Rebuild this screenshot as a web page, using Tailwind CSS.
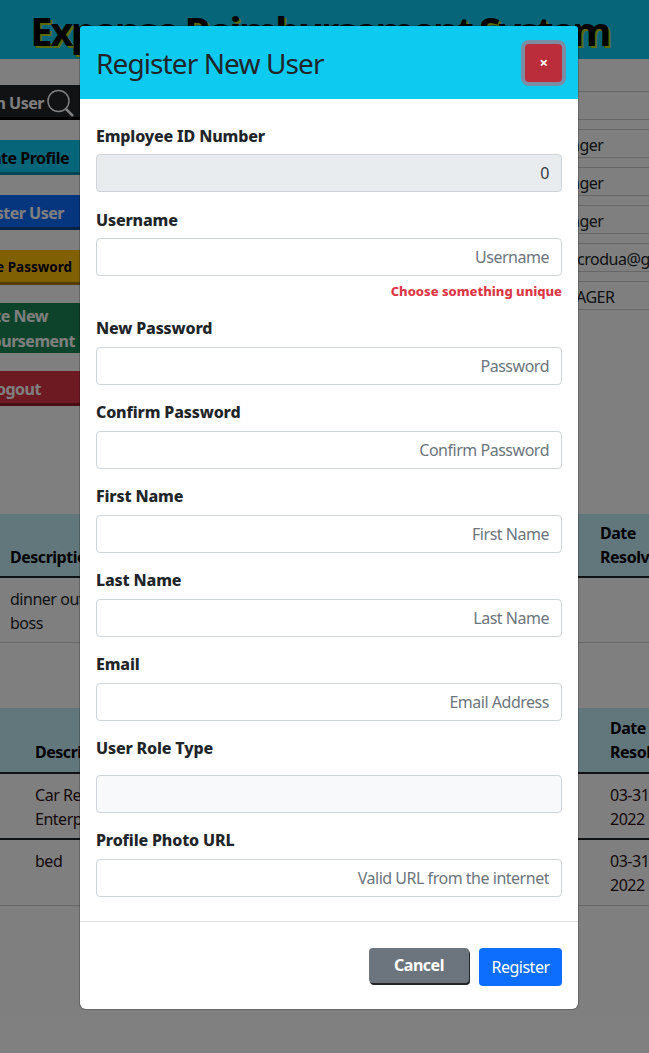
<!DOCTYPE html>
<html lang="en">
<head>
    <meta charset="UTF-8">
    <meta name="viewport" content="width=device-width, initial-scale=1.0">
    <title>Expense Reimbursement System</title>
    <script src="https://cdn.jsdelivr.net/npm/@tailwindcss/browser@4"></script>
</head>
<body class="bg-white font-['Noto_Sans',sans-serif] tracking-[-0.03em] text-[#212529]">
<div class="relative h-[1053px] w-[649px] overflow-hidden">

    <!-- Page behind the dialog -->
    <header class="flex h-[59px] justify-center overflow-hidden bg-[#0dcaf0] pr-[10px] pt-[5px]">
        <h1 class="whitespace-nowrap text-[40px] leading-[52px] font-bold tracking-[-2.6px] text-black [text-shadow:2px_2px_0_#b5d600]">Expense Reimbursement System</h1>
    </header>

    <div class="flex h-[455px] items-start">
        <div class="ml-[-100px] flex w-[180px] shrink-0 flex-col font-bold">
            <div class="mt-[26px] flex h-[35px] items-center justify-end whitespace-nowrap bg-[#212529] pr-[6px] text-white shadow-[inset_0_-3px_0_#000]">
                Search User
                <svg class="ml-[3px] shrink-0" width="27" height="28" viewBox="0 0 27 28" fill="none" stroke="#fff" stroke-width="1.5"><circle cx="11.5" cy="12" r="10.5"></circle><path d="M19 20l7 7" stroke-width="2.5"></path></svg>
            </div>
            <div class="mt-[20px] flex h-[35px] items-center justify-end whitespace-nowrap bg-[#0dcaf0] pr-[11px] text-black shadow-[inset_0_-3px_0_#0a8ca8]">Update Profile</div>
            <div class="mt-[20px] flex h-[35px] items-center justify-end whitespace-nowrap bg-[#0d6efd] pr-[16px] text-white shadow-[inset_0_-3px_0_#08428f]">Register User</div>
            <div class="mt-[20px] flex h-[35px] items-center justify-end whitespace-nowrap bg-[#ffc107] pr-[8px] text-[13.5px] tracking-normal text-black shadow-[inset_0_-3px_0_#a67c00]">Change Password</div>
            <div class="mt-[18px] h-[50px] whitespace-nowrap bg-[#198754] pr-[5px] pt-px text-right leading-[25px] text-white">
                <span class="block pr-[27px]">Create New</span>
                <span class="block">Reimbursement</span>
            </div>
            <div class="mt-[18px] flex h-[35px] items-center justify-end whitespace-nowrap bg-[#dc3545] pr-[39px] text-white shadow-[inset_0_-3px_0_#8f1f2a]">Logout</div>
        </div>

        <div class="ml-[220px] flex-1 pt-[32px]">
            <div class="flex flex-col gap-[9px] text-[16px]">
                <div class="h-[29px] border-y border-[#cfcfcf]"></div>
                <div class="h-[29px] whitespace-nowrap border-y border-[#cfcfcf] pl-[239px] leading-[30px]">Manager</div>
                <div class="h-[29px] whitespace-nowrap border-y border-[#cfcfcf] pl-[239px] leading-[30px]">Manager</div>
                <div class="h-[29px] whitespace-nowrap border-y border-[#cfcfcf] pl-[239px] leading-[30px]">Manager</div>
                <div class="h-[29px] whitespace-nowrap border-y border-[#cfcfcf] pl-[277px] leading-[30px]">crodua@gmail.com</div>
                <div class="h-[29px] whitespace-nowrap border-y border-[#cfcfcf] pl-[276px] leading-[30px]">AGER</div>
            </div>
        </div>
    </div>

    <!-- Pending table -->
    <div class="h-[64px] border-b-2 border-[#212529] bg-[#c5eef7]">
        <div class="flex h-[62px] items-end pb-[7px] font-bold leading-6 text-black">
            <span class="ml-[10px] w-[590px] shrink-0 whitespace-nowrap">Description</span>
            <span class="whitespace-nowrap">Date<br>Resolved</span>
        </div>
    </div>
    <div class="h-[65px] border-b border-[#cfcfcf] pl-[10px] pt-[9px] leading-6">dinner out<br>boss</div>

    <!-- Resolved table -->
    <div class="mt-[65px] h-[66px] border-b-2 border-[#212529] bg-[#c5eef7]">
        <div class="flex h-[64px] items-end pb-[8px] font-bold leading-6 text-black">
            <span class="ml-[35px] w-[575px] shrink-0 whitespace-nowrap">Description</span>
            <span class="whitespace-nowrap">Date<br>Resolved</span>
        </div>
    </div>
    <div class="flex h-[66px] border-b-2 border-[#212529] pt-[9px] leading-6 text-[#2a1215]">
        <span class="ml-[35px] w-[575px] shrink-0 whitespace-nowrap">Car Rental<br>Enterprise</span>
        <span class="whitespace-nowrap">03-31-<br>2022</span>
    </div>
    <div class="flex h-[66px] border-b border-[#cfcfcf] pt-[9px] leading-6 text-[#2a1215]">
        <span class="ml-[35px] w-[575px] shrink-0">bed</span>
        <span class="whitespace-nowrap">03-31-<br>2022</span>
    </div>

    <!-- Backdrop -->
    <div class="absolute inset-0 bg-black/50"></div>

    <!-- Modal -->
    <div class="absolute left-[80px] top-[26px] w-[498px] rounded-md bg-white shadow-[0_0_0_1px_rgba(0,0,0,0.2)]">
        <div class="flex h-[73px] items-center justify-between rounded-t-[3px] bg-[#0dcaf0] px-4">
            <h3 class="text-[28px] leading-[34px] tracking-[-0.9px]">Register New User</h3>
            <button class="flex h-[38px] w-[37px] items-center justify-center rounded bg-[#bb2d3b] text-[15px] font-bold text-white shadow-[0_0_0_4px_#7b8da5]">×</button>
        </div>

        <form class="px-4 pt-[25px]">
            <label class="block font-extrabold leading-6 tracking-[-0.01em]">Employee ID Number</label>
            <input class="mt-[6px] block h-[38px] w-full rounded border border-[#ced4da] bg-[#e9ecef] px-3 text-right text-[#343a40]" value="0" disabled>

            <label class="mt-[16px] block font-extrabold leading-6 tracking-[-0.01em]">Username</label>
            <input class="mt-[6px] block h-[38px] w-full rounded border border-[#ced4da] px-3 text-right placeholder:text-[#6c757d]" placeholder="Username">
            <p class="mt-[6px] h-[18px] text-right text-[13px] font-extrabold leading-[18px] tracking-normal text-[#dc3545]">Choose something unique</p>

            <label class="mt-[16px] block font-extrabold leading-6 tracking-[-0.01em]">New Password</label>
            <input class="mt-[7px] block h-[38px] w-full rounded border border-[#ced4da] px-3 text-right placeholder:text-[#6c757d]" placeholder="Password">

            <label class="mt-[15px] block font-extrabold leading-6 tracking-[-0.01em]">Confirm Password</label>
            <input class="mt-[7px] block h-[38px] w-full rounded border border-[#ced4da] px-3 text-right placeholder:text-[#6c757d]" placeholder="Confirm Password">

            <label class="mt-[15px] block font-extrabold leading-6 tracking-[-0.01em]">First Name</label>
            <input class="mt-[7px] block h-[38px] w-full rounded border border-[#ced4da] px-3 text-right placeholder:text-[#6c757d]" placeholder="First Name">

            <label class="mt-[15px] block font-extrabold leading-6 tracking-[-0.01em]">Last Name</label>
            <input class="mt-[7px] block h-[38px] w-full rounded border border-[#ced4da] px-3 text-right placeholder:text-[#6c757d]" placeholder="Last Name">

            <label class="mt-[15px] block font-extrabold leading-6 tracking-[-0.01em]">Email</label>
            <input class="mt-[7px] block h-[38px] w-full rounded border border-[#ced4da] px-3 text-right placeholder:text-[#6c757d]" placeholder="Email Address">

            <label class="mt-[15px] block font-extrabold leading-6 tracking-[-0.01em]">User Role Type</label>
            <div class="mt-[15px] h-[38px] rounded border border-[#ced4da] bg-[#f8f9fa]"></div>

            <label class="mt-[15px] block font-extrabold leading-6 tracking-[-0.01em]">Profile Photo URL</label>
            <input class="mt-[7px] block h-[38px] w-full rounded border border-[#ced4da] px-3 text-right placeholder:text-[#6c757d]" placeholder="Valid URL from the internet">
        </form>

        <div class="mt-6 flex h-[88px] items-start justify-end gap-[10px] border-t border-[#dee2e6] px-4 pt-[26px]">
            <button class="h-[35px] w-[100px] rounded bg-[#6c757d] pb-[2px] font-bold text-white shadow-[1px_2px_0_#212529]">Cancel</button>
            <button class="h-[38px] w-[83px] rounded bg-[#0d6efd] text-white">Register</button>
        </div>
    </div>
</div>
</body>
</html>
